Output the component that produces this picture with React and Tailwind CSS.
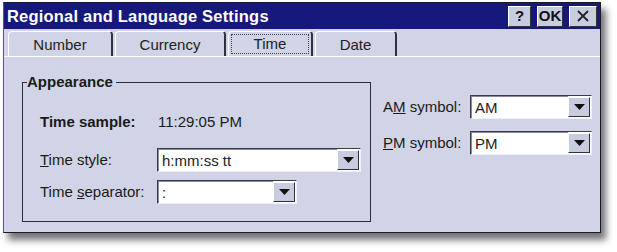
import React from "react";

const font = { fontFamily: '"Liberation Sans", Arial, sans-serif' };

function Combo({ value, width }) {
  return (
    <div
      className="flex h-[24px] bg-white border border-t-[#3a3a4a] border-l-[#3a3a4a] border-r-[#f0f0f8] border-b-[#f0f0f8] items-stretch"
      style={{ width }}
    >
      <div className="flex-1 pl-[3px] text-[15px] leading-[22px] text-[#222] border-t border-l border-[#8888a0]">
        {value}
      </div>
      <div className="w-[22px] my-[1px] mr-[1px] bg-[#c8cce0] border border-t-white border-l-white border-r-[#303040] border-b-[#303040] flex items-center justify-center">
        <svg width="11" height="6" viewBox="0 0 11 6">
          <polygon points="0,0 11,0 5.5,6" fill="#111" />
        </svg>
      </div>
    </div>
  );
}

function Tab({ label, width, selected }) {
  return (
    <div
      className={`h-[25px] rounded-t-[4px] border-t border-l border-t-white border-l-white border-r-2 border-r-[#303040] bg-[#d0d4e6] flex items-center justify-center ${selected ? "p-[2px]" : ""}`}
      style={{ width }}
    >
      {selected ? (
        <div className="w-full h-full border border-dotted border-[#444] flex items-center justify-center text-[15px] text-[#222]">
          {label}
        </div>
      ) : (
        <span className="text-[15px] text-[#222] mt-[2px]">{label}</span>
      )}
    </div>
  );
}

export default function App() {
  return (
    <div className="w-[617px] h-[252px] bg-white overflow-hidden pl-[3px] pt-[2px]" style={font}>
      <div className="w-[598px] h-[231px] bg-[#d0d4e6] border border-[#1a1a2a] border-l-[#a04040] shadow-[5px_7px_7px_rgba(0,0,0,0.55)] flex flex-col">
        {/* title bar */}
        <div className="h-[26px] bg-[#17187c] flex items-center justify-between pl-[3px] pr-[3px]">
          <span className="text-white font-bold text-[16.5px] tracking-[0.2px]">Regional and Language Settings</span>
          <div className="flex gap-[6px] items-center">
            <div className="w-[23px] h-[21px] bg-[#c8cce0] border border-t-white border-l-white border-r-[#303040] border-b-[#303040] flex items-center justify-center font-bold text-[15px] text-[#111]">?</div>
            <div className="w-[26px] h-[21px] bg-[#c8cce0] border border-t-white border-l-white border-r-[#303040] border-b-[#303040] flex items-center justify-center font-bold text-[15px] text-[#111]">OK</div>
            <div className="w-[28px] h-[21px] bg-[#c8cce0] border border-t-white border-l-white border-r-[#303040] border-b-[#303040] flex items-center justify-center">
              <svg width="12" height="12" viewBox="0 0 12 12">
                <path d="M1 1 L11 11 M11 1 L1 11" stroke="#222" strokeWidth="1.8" />
              </svg>
            </div>
          </div>
        </div>
        {/* tabs */}
        <div className="flex gap-[2px] pl-[4px] pt-[2px] border-b border-b-white">
          <Tab label="Number" width={105} />
          <Tab label="Currency" width={111} />
          <Tab label="Time" width={85} selected />
          <Tab label="Date" width={82} />
        </div>
        {/* content */}
        <div className="flex pl-[18px] pt-[25px]">
          <div className="relative w-[349px] h-[140px] border border-[#2a2a45] pt-[29px] pl-[17px]">
            <span className="absolute -top-[11px] left-[4px] bg-[#d0d4e6] pr-[3px] text-[15px] font-bold text-[#1a1a1a] leading-[20px]">
              Appearance
            </span>
            <div className="flex items-center text-[15px] text-[#1a1a1a] h-[20px]">
              <span className="font-bold w-[118px]">Time sample:</span>
              <span>11:29:05 PM</span>
            </div>
            <div className="flex items-center mt-[16px] text-[15px] text-[#1a1a1a]">
              <span className="w-[117px]"><u>T</u>ime style:</span>
              <Combo value="h:mm:ss tt" width={204} />
            </div>
            <div className="flex items-center mt-[8px] text-[15px] text-[#1a1a1a]">
              <span className="w-[117px]">Time <u>s</u>eparator:</span>
              <Combo value=":" width={140} />
            </div>
          </div>
          <div className="flex flex-col pl-[12px] pt-[13px] gap-[12px]">
            <div className="flex items-center text-[15px] text-[#1a1a1a]">
              <span className="w-[87px]">A<u>M</u> symbol:</span>
              <Combo value="AM" width={122} />
            </div>
            <div className="flex items-center text-[15px] text-[#1a1a1a]">
              <span className="w-[87px]"><u>P</u>M symbol:</span>
              <Combo value="PM" width={122} />
            </div>
          </div>
        </div>
      </div>
    </div>
  );
}
